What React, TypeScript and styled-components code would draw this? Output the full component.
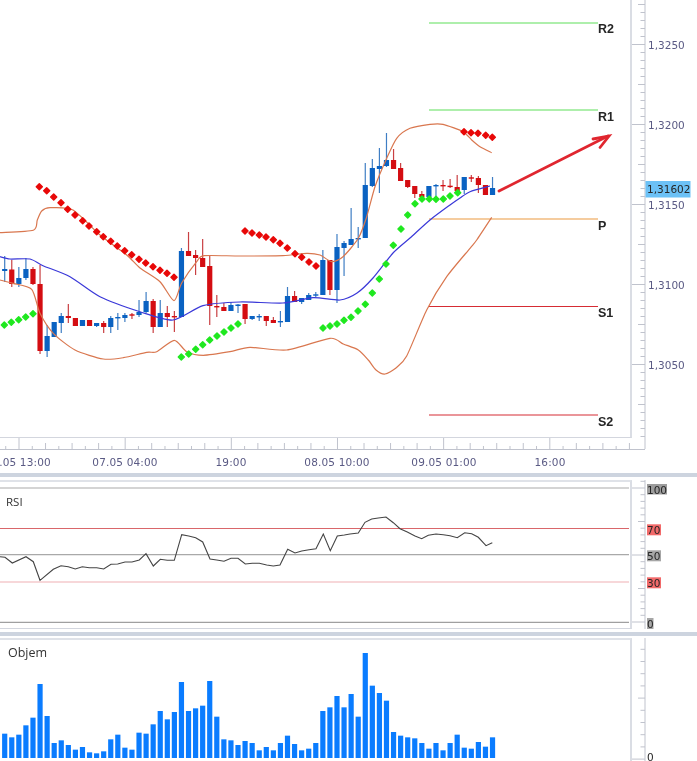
import React from 'react'
import styled, { createGlobalStyle } from 'styled-components'

const GlobalStyle = createGlobalStyle`
  html, body { margin: 0; padding: 0; background: #fff; overflow: hidden; }
`

const BAR_START = 4.7
const BAR_STEP = 7.07
const barX = (i: number) => BAR_START + BAR_STEP * i

// [top of body, bottom of body, wick high, wick low, 1 = up (blue)]
const candles: number[][] = [
  [269, 271, 256, 282, 1], [269.5, 284, 260, 287, 0], [278, 284, 267, 287, 1], [269, 278, 258, 280, 1],
  [269, 284, 267, 285, 0], [284, 351, 265, 354, 0], [336, 351, 325, 357, 1], [322, 337, 322, 337, 1],
  [316, 323, 313, 333, 1], [316, 318, 304, 323, 0], [318, 326, 318, 326, 0], [320, 326, 320, 326, 1],
  [320, 326, 320, 326, 0], [323, 326, 323, 327, 1], [323, 327, 321, 333, 0], [318, 327, 316, 333, 1],
  [317, 318, 313, 330, 1], [315, 318, 313, 322, 1], [314.3, 315.3, 313, 319, 0], [312, 315, 300, 317, 1],
  [301, 312, 292, 313, 1], [301, 327, 299, 333, 0], [313, 327, 300, 327, 1], [313, 317, 306, 327, 0],
  [316, 317, 311, 332, 0], [251, 317, 248, 317, 1], [251, 256, 232, 256, 0], [255, 258, 250, 275, 0],
  [258, 267, 239, 267, 0], [266, 306, 256, 325, 0], [306, 307.3, 295, 317, 0], [307, 311, 303, 311, 0],
  [305, 311, 302, 311, 1], [304.5, 306, 304, 313, 1], [304, 319, 304, 324, 0], [316, 319, 316, 320, 1],
  [316, 317, 314, 321, 1], [316, 321, 316, 326, 0], [320, 323, 317, 323, 0], [321, 322, 311, 327, 1],
  [296, 322, 287, 322, 1], [296, 302, 291, 302, 0], [298, 302, 298, 304, 1], [295, 300, 293, 300, 1],
  [294.3, 295.7, 292, 297, 1], [260, 295, 250, 295, 1], [260, 290, 260, 295, 0], [247, 290, 234, 303, 1],
  [243, 248, 241, 276, 1], [239, 245, 208, 245, 1], [238, 239.3, 227, 248, 1], [185, 238, 163, 238, 1],
  [168, 186, 159, 187, 1], [166, 169, 148, 193, 1], [160, 166, 133, 167, 1], [160, 169, 149, 169, 0],
  [168, 181, 163, 181, 0], [180, 187, 180, 188, 0], [186, 194, 186, 198, 0], [194, 197, 191, 200, 0],
  [186, 197, 186, 200, 1], [185, 186, 184, 200, 1], [185, 186, 180, 191, 0], [185.7, 186.7, 179, 188, 0],
  [187, 191, 175, 191, 0], [177, 190, 177, 194, 1], [177.3, 178.7, 175, 182, 0], [178, 185, 176, 193, 0],
  [185, 195, 185, 195, 0], [188, 195, 177, 195, 1],
]

const upperBand = '0,232.7 33.3,230.3 37.3,220 41.7,211 50,207.7 73,210 100,235 126.7,255 140,268 160,281.7 174,300.7 181.7,283 196.7,261.7 204,255.7 240,256 283,255.7 306.7,253.3 320,255 331.7,261.7 343,256.7 358.3,238.3 366.7,216.7 375,186.7 386.7,158.3 396.7,138.3 410,128.3 430,124.3 443,124.3 463,131.7 471.7,140 480,146.7 491.7,152.7'
const lowerBand = '0,280 13,283.3 31.7,289.3 40,313.3 53.3,333.3 75,350 103.3,359 123.3,357.7 146.7,352.3 156.7,351.7 174.3,340.3 186.7,351.7 203.3,355.3 230,351.7 250,347.3 286.7,350 330,338.3 343.3,344 358.3,350 368.3,360 376,370 385,374 396,368 406.7,356 426.7,310 446.7,276.7 470,248.3 476.7,240 491.7,217.3'
const middleBand = '0,256.7 10,259 30,259 43,265.7 70,276.7 100,296.7 140,311.7 173,320 203,305.7 240,302 283,303 313,297.7 340,300 356.7,293.3 373,278 393,253 410,238 430,220 450,205 460,198 470,191.7 490,186'

const redDots = [
  [39.3, 186.7], [46.7, 190.7], [53.7, 197], [61, 202.7], [67.7, 209.3], [75, 215], [82.7, 220.7], [89, 226], [96.7, 231.7], [103.3, 236.7],
  [110.7, 241.3], [117.3, 246], [124.7, 250.7], [131.7, 254.7], [139, 259.3], [145.7, 263], [153, 266.7], [160, 270.3], [167, 273.3], [174, 277.3],
  [245, 231], [252, 233], [259.3, 235], [266, 237], [273.3, 239.7], [280, 243.3], [287.3, 248], [295, 253.7], [301.7, 257.3], [309, 262], [316, 266],
  [464, 131.7], [471, 132.7], [478, 133.3], [485.7, 135.3], [492.3, 137.3],
]

const greenDots = [
  [4.3, 325], [11.3, 322.3], [18.7, 319.7], [25.7, 317], [33, 313.7],
  [181.3, 357], [188.7, 354], [195.7, 349.3], [202.7, 344.7], [209.7, 340], [217, 336], [224, 332], [231, 328], [238, 324],
  [323, 328], [330, 326], [337, 324], [344, 320.3], [351, 317.3], [358, 311], [365.3, 304.3], [372.3, 293], [379.3, 279], [386, 264], [393.3, 245.3], [401, 229], [407.7, 215], [415, 203.7],
  [422, 199], [429.3, 199], [436, 199.3], [443.3, 199], [450, 196], [457.7, 192.7],
]

const levels = [
  { y: 23, color: '#5fe05a', label: 'R2', labelY: 33 },
  { y: 110, color: '#5fe05a', label: 'R1', labelY: 121 },
  { y: 219, color: '#eb9a40', label: 'P', labelY: 230 },
  { y: 306.5, color: '#d62c34', label: 'S1', labelY: 317 },
  { y: 415, color: '#d62c34', label: 'S2', labelY: 426 },
]

const rsiPoints = '0,556.7 5,557.3 12.3,563 26,556.7 33.3,561.7 40,580.3 53.3,569.3 61,565.7 68.3,566.7 75.3,569 82.3,566.7 89.3,567.7 96.7,567.7 103.7,569 111,564.3 117.7,564 125,562 132,562 139.3,560 146,553.7 153.3,566 160.3,559.3 167.3,560.3 174.3,560.3 181.7,534.7 188.7,536 195.7,537.7 202.7,542 210,559 216.7,560 224,561.3 231,558.3 238,558.3 245.3,564 252.3,563.3 259.3,563.3 266.7,565 273.3,566 280,565 287.7,549.3 295,553 301.7,551 309,549.7 316,548.7 323.3,534 330.3,550.7 337.3,536 344.3,535 350,534 358.3,533 365,522.3 371.7,519 378.3,518 386,517 393.3,522.7 400,528.7 407.3,532 415,536 421.7,538.7 428.3,535.3 436,534 443.3,534.7 450,535.7 457.3,537.7 464.7,532.7 471.7,533.7 478.3,537.3 486,545.7 492.3,542.7'

const volumeTops = [
  311, 322, 314, 286, 263, 162, 258, 339, 331, 345, 359, 351, 367, 370, 364, 328, 314, 353, 359, 308,
  311, 283, 243, 268, 246, 156, 243, 235, 227, 153, 260, 328, 331, 345, 333, 339, 361, 351, 361, 339,
  317, 342, 361, 356, 339, 243, 232, 198, 232, 192, 260, 69, 167, 189, 212, 306, 317, 322, 325, 339,
  356, 339, 361, 339, 314, 353, 356, 336, 350, 322,
].map((z) => 630 + z / 3)

const prices = [
  { y: 49, text: '1,3250' }, { y: 129, text: '1,3200' }, { y: 209, text: '1,3150' },
  { y: 289, text: '1,3100' }, { y: 369, text: '1,3050' },
]

const times = [
  { x: 25, text: '.05 13:00' }, { x: 125, text: '07.05 04:00' }, { x: 231, text: '19:00' },
  { x: 337, text: '08.05 10:00' }, { x: 444, text: '09.05 01:00' }, { x: 550, text: '16:00' },
]

const rsiLevels = [
  { y: 488, color: '#a9a9a9' }, { y: 528.5, color: '#d9666a' }, { y: 554.7, color: '#a9a9a9' },
  { y: 582, color: '#efb0b4' }, { y: 622.3, color: '#a0a0a0' },
]

const rsiLabels = [
  { text: '100', y: 484, w: 20, h: 10.5, bg: '#9c9c9c' }, { text: '70', y: 524.3, w: 14, h: 11, bg: '#f26a6a' },
  { text: '50', y: 550.3, w: 14, h: 11, bg: '#a6a6a6' }, { text: '30', y: 577.3, w: 14, h: 11, bg: '#f26a6a' },
  { text: '0', y: 618, w: 6.5, h: 11, bg: '#a6a6a6' },
]

// turns "x,y x,y ..." into a softly rounded path, the bands are not straight segments
const smoothPath = (raw: string) => {
  const pts = raw.split(' ').map((p) => p.split(',').map(Number))
  let d = `M${pts[0][0]},${pts[0][1]}`
  for (let i = 0; i < pts.length - 1; i++) {
    const a = pts[Math.max(i - 1, 0)]
    const b = pts[i]
    const c = pts[i + 1]
    const e = pts[Math.min(i + 2, pts.length - 1)]
    const k = 0.12
    d += ` C${b[0] + (c[0] - a[0]) * k},${b[1] + (c[1] - a[1]) * k} ${c[0] - (e[0] - b[0]) * k},${c[1] - (e[1] - b[1]) * k} ${c[0]},${c[1]}`
  }
  return d
}

const Page = styled.div`
  width: 697px;
  height: 761px;
  overflow: hidden;
  background: #fff;
  display: flex;
  flex-direction: column;
  font-family: "DejaVu Sans", sans-serif;
  filter: blur(0.3px);
`

const MainPane = styled.section`
  height: 473px;
  flex: none;
  display: grid;
  grid-template-columns: 632px 65px;
  grid-template-rows: 438px 35px;
`

const Pane = styled.section<{ $height: number }>`
  height: ${(p) => p.$height}px;
  flex: none;
  display: grid;
  grid-template-columns: 632px 65px;
`

const Plot = styled.div<{ $top?: boolean }>`
  position: relative;
  box-sizing: border-box;
  border-right: 2px solid #dadde4;
  border-top: ${(p) => (p.$top ? '2px solid #dfe2e8' : 'none')};
  border-bottom: 1.5px solid #d3d6de;
  overflow: hidden;

  svg { display: block; }
`

const VolumePlot = styled(Plot)`
  border-bottom: none;
`

const Separator = styled.div<{ $before: number; $after: number }>`
  height: 3.5px;
  flex: none;
  background: #cdd4df;
  margin-top: ${(p) => p.$before}px;
  margin-bottom: ${(p) => p.$after}px;
`

const PaneTitle = styled.span<{ $left: number; $top: number; $size: number }>`
  position: absolute;
  left: ${(p) => p.$left}px;
  top: ${(p) => p.$top}px;
  font-family: "Open Sans", sans-serif;
  font-size: ${(p) => p.$size}px;
  line-height: 14px;
  color: #333;
`

const PriceAxis = styled.svg`
  grid-column: 2;
  grid-row: 1 / 3;
  display: block;
  overflow: visible;
`

const TimeAxis = styled.svg`
  grid-column: 1 / 3;
  grid-row: 2;
  display: block;
`

const SideAxis = styled.svg`
  display: block;
`

const AxisLabel = styled.text`
  font-size: 10.5px;
  fill: #5a5a84;
`

const TimeLabel = styled(AxisLabel)`
  letter-spacing: 0.15px;
  text-anchor: middle;
`

const ValueLabel = styled.text`
  font-size: 10.5px;
  fill: #262626;
`

const LevelLabel = styled.text`
  font-family: "Liberation Sans", sans-serif;
  font-size: 12.5px;
  font-weight: 700;
  fill: #262626;
`

function VerticalTicks({ from, step, count, mod }: { from: number; step: number; count: number; mod: number }) {
  const ticks = []
  for (let k = 0; k < count; k++) {
    const n = k + mod
    const y = from + step * k
    const start = n % 10 === 0 ? 0 : n % 5 === 0 ? 6 : 8.5
    ticks.push(<line key={k} x1={start} x2={13} y1={y} y2={y} stroke="#c0c3cd" strokeWidth={1} />)
  }
  return <g>{ticks}</g>
}

function Candle({ i, data }: { i: number; data: number[] }) {
  const [top, bottom, high, low, up] = data
  const x = barX(i)
  const body = up ? '#0a62c2' : '#d40d12'
  const wick = up ? '#3f7ec4' : '#c93f42'
  return (
    <g>
      <line x1={x} x2={x} y1={high} y2={low} stroke={wick} strokeWidth={1.2} />
      <rect x={x - 2.6} y={top} width={5.2} height={Math.max(bottom - top, 1.4)} fill={body} />
    </g>
  )
}

function Diamond({ x, y, color }: { x: number; y: number; color: string }) {
  return <polygon points={`${x},${y - 3} ${x + 3},${y} ${x},${y + 3} ${x - 3},${y}`} fill={color} stroke={color} strokeWidth={1.5} strokeLinejoin="round" />
}

function timeTicks() {
  const ticks = []
  for (let k = 0; k < 48; k++) {
    const x = 5.73 + 13.27 * k
    const major = k % 8 === 1
    const long = k % 2 === 1
    const top = major ? 0 : long ? 5 : 8
    ticks.push(<line key={k} x1={x} x2={x} y1={top} y2={11.5} stroke="#c0c3cd" strokeWidth={1} />)
  }
  return ticks
}

export default function App() {
  return (
    <>
      <GlobalStyle />
      <Page>
        <MainPane>
          <Plot>
            <svg width={630} height={437} viewBox="0 0 630 437">
              {levels.map((l) => (
                <g key={l.label}>
                  <line x1={429} x2={598} y1={l.y} y2={l.y} stroke={l.color} strokeWidth={1.2} />
                  <LevelLabel x={598} y={l.labelY}>{l.label}</LevelLabel>
                </g>
              ))}
              {candles.map((c, i) => <Candle key={i} i={i} data={c} />)}
              <path d={smoothPath(upperBand)} fill="none" stroke="#d9774f" strokeWidth={1.2} />
              <path d={smoothPath(lowerBand)} fill="none" stroke="#d9774f" strokeWidth={1.2} />
              <path d={smoothPath(middleBand)} fill="none" stroke="#3a38d8" strokeWidth={1.2} />
              {redDots.map(([x, y], i) => <Diamond key={i} x={x} y={y} color="#e80808" />)}
              {greenDots.map(([x, y], i) => <Diamond key={i} x={x} y={y} color="#1fe81f" />)}
              <g fill="none" stroke="#e0262f" strokeWidth={2.8} strokeLinecap="round">
                <line x1={499} y1={191} x2={608} y2={136} />
                <polyline points="593,139 609,136 600,147.5" />
              </g>
            </svg>
          </Plot>
          <TimeAxis width={697} height={35} viewBox="0 0 697 35">
            {timeTicks()}
            <line x1={0} x2={645} y1={11.5} y2={11.5} stroke="#c0c3cd" strokeWidth={1} />
            {times.map((t) => (
              <TimeLabel key={t.text} x={t.x} y={28}>{t.text}</TimeLabel>
            ))}
          </TimeAxis>
          <PriceAxis width={65} height={449} viewBox="632 0 65 449">
            <g transform="translate(632 0)">
              <VerticalTicks from={4.5} step={8} count={55} mod={5} />
              <line x1={13} x2={13} y1={0} y2={449} stroke="#c0c3cd" strokeWidth={1} />
            </g>
            {prices.map((p) => <AxisLabel key={p.text} x={648} y={p.y}>{p.text}</AxisLabel>)}
            <rect x={645.5} y={181} width={45} height={16.5} fill="#6cc1f6" />
            <ValueLabel x={647} y={193}>1,31602</ValueLabel>
          </PriceAxis>
        </MainPane>
        <Separator $before={0} $after={3.5} />
        <Pane $height={149}>
          <Plot $top>
            <svg width={630} height={146} viewBox="0 482 630 146">
              {rsiLevels.map((l) => (
                <line key={l.y} x1={0} x2={629} y1={l.y} y2={l.y} stroke={l.color} strokeWidth={1.2} />
              ))}
              <polyline points={rsiPoints} fill="none" stroke="#444" strokeWidth={1.1} />
            </svg>
            <PaneTitle $left={6} $top={13} $size={11.5}>RSI</PaneTitle>
          </Plot>
          <SideAxis width={65} height={149} viewBox="632 480 65 149">
            <g transform="translate(632 0)">
              <VerticalTicks from={481.3} step={6.7} count={22} mod={9} />
              <line x1={13} x2={13} y1={480} y2={629} stroke="#c0c3cd" strokeWidth={1} />
            </g>
            {rsiLabels.map((l) => (
              <g key={l.text}>
                <rect x={647} y={l.y} width={l.w} height={l.h} fill={l.bg} />
                <ValueLabel x={647} y={l.y + 9.5}>{l.text}</ValueLabel>
              </g>
            ))}
          </SideAxis>
        </Pane>
        <Separator $before={3} $after={2.5} />
        <Pane $height={123}>
          <VolumePlot $top>
            <svg width={630} height={121} viewBox="0 640 630 121">
              {volumeTops.map((top, i) => (
                <rect key={i} x={barX(i) - 2.6} y={top} width={5.2} height={758 - top} fill="#0a7cff" />
              ))}
            </svg>
            <PaneTitle $left={8} $top={6} $size={12.5}>Objem</PaneTitle>
          </VolumePlot>
          <SideAxis width={65} height={123} viewBox="632 638 65 123">
            <g transform="translate(632 0)">
              <VerticalTicks from={649.3} step={12.2} count={10} mod={1} />
              <line x1={13} x2={13} y1={638} y2={761} stroke="#c0c3cd" strokeWidth={1} />
            </g>
            <ValueLabel x={647} y={761}>0</ValueLabel>
          </SideAxis>
        </Pane>
      </Page>
    </>
  )
}
